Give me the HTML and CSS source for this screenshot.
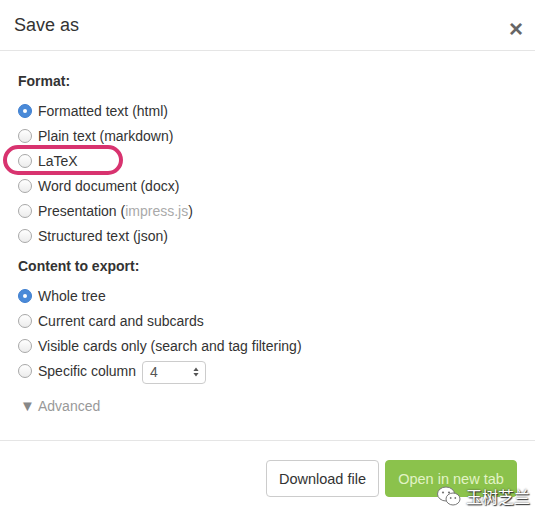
FILE: index.html
```html
<!DOCTYPE html>
<html>
<head>
<meta charset="utf-8">
<link rel="stylesheet" href="styles.css">
</head>
<body>
<div class="modal">
  <div class="header">
    <div class="title">Save as</div>
    <div class="close">×</div>
  </div>
  <div class="body">
    <div class="label">Format:</div>
    <div class="list">
      <div class="row"><span class="radio on"></span><span>Formatted text (html)</span></div>
      <div class="row"><span class="radio"></span><span>Plain text (markdown)</span></div>
      <div class="row"><span class="radio"></span><span>LaTeX</span></div>
      <div class="row"><span class="radio"></span><span>Word document (docx)</span></div>
      <div class="row"><span class="radio"></span><span>Presentation (<span class="muted">impress.js</span>)</span></div>
      <div class="row"><span class="radio"></span><span>Structured text (json)</span></div>
    </div>
    <div class="label second">Content to export:</div>
    <div class="list">
      <div class="row"><span class="radio on"></span><span>Whole tree</span></div>
      <div class="row"><span class="radio"></span><span>Current card and subcards</span></div>
      <div class="row"><span class="radio"></span><span>Visible cards only (search and tag filtering)</span></div>
      <div class="row"><span class="radio"></span><span>Specific column</span>
        <span class="select"><span>4</span>
          <svg width="6" height="10" viewBox="0 0 6 10"><path d="M3 0.5 L5.6 4 H0.4 Z M3 9.5 L5.6 6 H0.4 Z" fill="#555"/></svg>
        </span>
      </div>
    </div>
    <div class="advanced"><span class="tri">▼</span> Advanced</div>
    <div class="highlight"></div>
  </div>
  <div class="footer">
    <button class="btn">Download file</button>
    <button class="btn green">Open in new tab</button>
  </div>
  <div class="watermark">
    <svg width="26" height="22" viewBox="0 0 26 22">
      <ellipse cx="10" cy="9" rx="8.5" ry="7" fill="#fff" stroke="#777" stroke-width="1"/>
      <circle cx="7" cy="7.5" r="1.1" fill="#777"/>
      <circle cx="13" cy="7.5" r="1.1" fill="#777"/>
      <ellipse cx="17" cy="14" rx="7" ry="6" fill="#fff" stroke="#777" stroke-width="1"/>
      <circle cx="14.7" cy="13" r="0.9" fill="#777"/>
      <circle cx="19.3" cy="13" r="0.9" fill="#777"/>
    </svg>
    <span class="wm-text">玉树芝兰</span>
  </div>
</div>
</body>
</html>
```

FILE: styles.css
```css
html, body {
  margin: 0;
  padding: 0;
  background: #fff;
}
body {
  font-family: "Liberation Sans", Arial, sans-serif;
  color: #333;
  font-size: 14px;
}
.modal {
  position: relative;
  width: 535px;
  height: 516px;
  overflow: hidden;
  background: #fff;
}
.header {
  height: 50px;
  display: flex;
  align-items: center;
  justify-content: space-between;
  padding: 0 12px 0 14px;
  border-bottom: 1px solid #e5e5e5;
}
.title {
  font-size: 18px;
  color: #333;
  line-height: 20px;
}
.close {
  font-size: 24px;
  font-weight: bold;
  color: #666;
  line-height: 20px;
  margin-top: 7px;
}
.body {
  position: relative;
  padding: 20px 18px 24px 18px;
}
.label {
  font-weight: bold;
  line-height: 20px;
  margin-bottom: 7px;
}
.label.second {
  margin-top: 8px;
  margin-bottom: 7px;
}
.list {
  display: flex;
  flex-direction: column;
}
.row {
  height: 25px;
  display: flex;
  align-items: center;
  gap: 6px;
  white-space: nowrap;
}
.radio {
  width: 14px;
  height: 14px;
  border-radius: 50%;
  box-sizing: border-box;
  border: 1px solid #a8a8a8;
  background: linear-gradient(#fff, #ececec);
  flex: none;
  position: relative;
}
.radio.on {
  border: 1px solid #3f7fd0;
  background: #4a8ad8;
}
.radio.on::after {
  content: "";
  position: absolute;
  left: 4px;
  top: 4px;
  width: 4px;
  height: 4px;
  border-radius: 50%;
  background: #fff;
}
.muted {
  color: #aaa;
}
.select {
  width: 64px;
  height: 23px;
  box-sizing: border-box;
  border: 1px solid #ccc;
  border-radius: 4px;
  display: flex;
  align-items: center;
  justify-content: space-between;
  padding: 0 6px 0 7px;
  color: #555;
  margin-top: 3px;
}
.advanced {
  margin-top: 13px;
  line-height: 20px;
  color: #999;
  padding-left: 2px;
}
.tri {
  font-size: 15px;
  color: #888;
}
.highlight {
  position: absolute;
  left: 3px;
  top: 94px;
  width: 120px;
  height: 30px;
  box-sizing: border-box;
  border: 4px solid #d8336f;
  border-radius: 15px;
}
.footer {
  border-top: 1px solid #e5e5e5;
  display: flex;
  justify-content: flex-end;
  gap: 6px;
  padding: 19px 18px 0 18px;
}
.btn {
  font-family: "Liberation Sans", Arial, sans-serif;
  font-size: 14.5px;
  height: 37px;
  padding: 0 12px;
  border-radius: 4px;
  border: 1px solid #ccc;
  background: #fff;
  color: #333;
}
.btn.green {
  width: 132px;
  background: #8bc24c;
  border-color: #8bc24c;
  color: #e2f3c6;
}
.watermark {
  position: absolute;
  left: 436px;
  top: 485px;
  display: flex;
  align-items: center;
  gap: 4px;
}
.wm-text {
  font-family: "Noto Sans CJK SC", sans-serif;
  font-size: 16px;
  color: #fff;
  text-shadow: 0 0 2px #333, 1px 1px 1px #333;
  line-height: 20px;
}
```
